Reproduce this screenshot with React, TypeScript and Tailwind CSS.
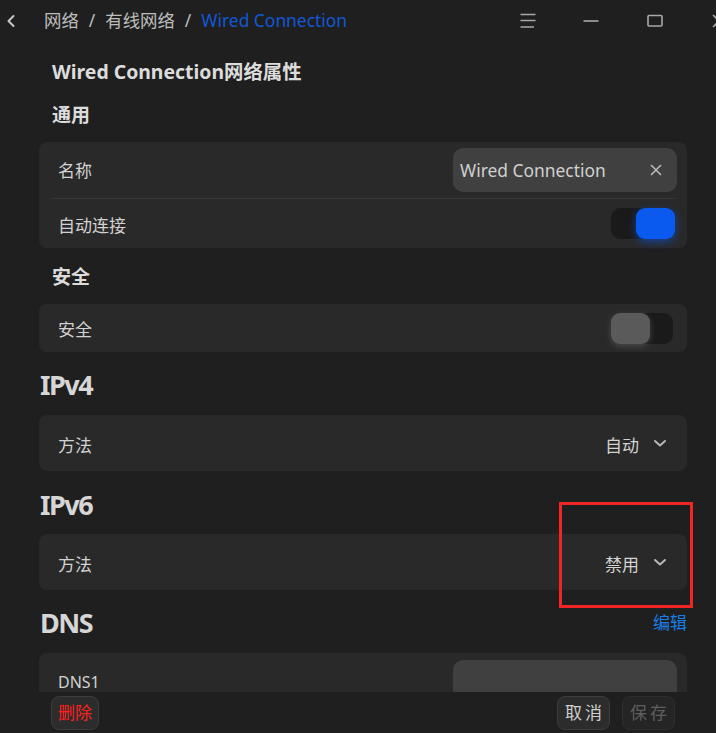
import React from "react";

const font = { fontFamily: '"Noto Sans", "Noto Sans CJK SC", sans-serif' };

function Chevron() {
  return (
    <svg width="14" height="10" viewBox="0 0 14 10" className="ml-[14px]">
      <path d="M2 3 L7 7.5 L12 3" fill="none" stroke="#b8b8b8" strokeWidth="2" strokeLinecap="round" strokeLinejoin="round" />
    </svg>
  );
}

function ToggleOn() {
  return (
    <div className="relative w-[64px] h-[31px] rounded-[9px] bg-[#1a1a1a]">
      <div className="absolute right-0 top-0 w-[39px] h-[31px] rounded-[9px] bg-[#0a5af0] shadow-[0_3px_8px_rgba(10,90,240,0.55)]" />
    </div>
  );
}

function ToggleOff() {
  return (
    <div className="relative w-[62px] h-[31px] rounded-[9px] bg-[#1a1a1a]">
      <div className="absolute left-0 top-0 w-[39px] h-[31px] rounded-[9px] bg-[#5a5a5a] shadow-[0_2px_6px_rgba(120,120,120,0.45)]" />
    </div>
  );
}

export default function App() {
  return (
    <div className="w-[716px] h-[733px] bg-[#1f1f1f] flex flex-col overflow-hidden relative text-[#d2d2d2]" style={font}>
      {/* Top bar */}
      <div className="h-[42px] flex items-center shrink-0 relative">
        <svg width="10" height="14" viewBox="0 0 10 14" className="ml-[6px]">
          <path d="M7.5 2 L2.5 7 L7.5 12" fill="none" stroke="#c8c8c8" strokeWidth="2" strokeLinecap="round" strokeLinejoin="round" />
        </svg>
        <div className="ml-[28px] flex items-center text-[17.4px] leading-none">
          <span className="text-[#bdbdbd]">网络</span>
          <span className="text-[#bdbdbd] mx-[10px]">/</span>
          <span className="text-[#bdbdbd]">有线网络</span>
          <span className="text-[#bdbdbd] mx-[10px]">/</span>
          <span className="text-[#1258d6]">Wired Connection</span>
        </div>
        <div className="flex-1" />
        <svg width="16" height="16" viewBox="0 0 16 16" className="mr-[47px]">
          <path d="M0.5 1.5 H15.5 M0.5 7.5 H15.5 M0.5 14 H14" stroke="#a8a8a8" strokeWidth="1.4" />
        </svg>
        <svg width="16" height="16" viewBox="0 0 16 16" className="mr-[48px]">
          <path d="M0.5 8 H15.5" stroke="#a8a8a8" strokeWidth="1.6" />
        </svg>
        <svg width="16" height="16" viewBox="0 0 16 16" className="mr-[46px]">
          <rect x="1" y="2.5" width="14" height="10.5" rx="1" fill="none" stroke="#a8a8a8" strokeWidth="1.6" />
        </svg>
        <svg width="7" height="16" viewBox="0 0 7 16">
          <path d="M4 2 L16 14 M16 2 L4 14" stroke="#a8a8a8" strokeWidth="1.6" />
        </svg>
      </div>

      {/* Content */}
      <div className="flex-1 overflow-hidden pl-[39px] w-[687px]">
        <div className="mt-[16px] h-[28px] flex items-center pl-[13px] text-[19.4px] font-bold text-[#dcdcdc]">
          Wired Connection网络属性
        </div>
        <div className="mt-[16px] h-[26px] flex items-center pl-[13px] text-[19px] font-bold text-[#dcdcdc]">通用</div>
        <div className="mt-[14px] rounded-[8px] bg-[#292929]">
          <div className="h-[56px] flex items-center pl-[19px] pr-[10px]">
            <span className="text-[17px] pt-[2px]">名称</span>
            <div className="flex-1" />
            <div className="w-[224px] h-[44px] rounded-[10px] bg-[#404040] flex items-center pl-[7px] pr-[15px]">
              <span className="text-[17.4px] text-[#d0d0d0] flex-1">Wired Connection</span>
              <svg width="12" height="12" viewBox="0 0 12 12">
                <path d="M1 1 L11 11 M11 1 L1 11" stroke="#bdbdbd" strokeWidth="1.5" />
              </svg>
            </div>
          </div>
          <div className="mx-[12px] h-px bg-[#363636]" />
          <div className="h-[49px] flex items-center pl-[19px] pr-[12px]">
            <span className="text-[17px] pt-[4px]">自动连接</span>
            <div className="flex-1" />
            <ToggleOn />
          </div>
        </div>

        <div className="mt-[16px] h-[26px] flex items-center pl-[13px] text-[19px] font-bold text-[#dcdcdc]">安全</div>
        <div className="mt-[14px] h-[48px] rounded-[8px] bg-[#292929] flex items-center pl-[19px] pr-[14px]">
          <span className="text-[17px] pt-[3px]">安全</span>
          <div className="flex-1" />
          <ToggleOff />
        </div>

        <div className="mt-[17px] h-[32px] flex items-center pl-[1px] text-[27px] font-bold tracking-[-1.5px] text-[#d6d6d6]">IPv4</div>
        <div className="mt-[14px] h-[56px] rounded-[8px] bg-[#292929] flex items-center pl-[19px] pr-[20px]">
          <span className="text-[17px] pt-[5px]">方法</span>
          <div className="flex-1" />
          <span className="text-[17px] pt-[5px]">自动</span>
          <Chevron />
        </div>

        <div className="mt-[18px] h-[32px] flex items-center pl-[1px] text-[27px] font-bold tracking-[-1.5px] text-[#d6d6d6]">IPv6</div>
        <div className="mt-[13px] h-[56px] rounded-[8px] bg-[#292929] flex items-center pl-[19px] pr-[20px]">
          <span className="text-[17px] pt-[5px]">方法</span>
          <div className="flex-1" />
          <span className="text-[17px] pt-[5px]">禁用</span>
          <Chevron />
        </div>

        <div className="mt-[17px] h-[32px] flex items-center pl-[1px]">
          <span className="text-[27px] font-bold tracking-[-1.5px] text-[#d6d6d6]">DNS</span>
          <div className="flex-1" />
          <span className="text-[17px] text-[#1a7ee8]">编辑</span>
        </div>
        <div className="mt-[14px] h-[70px] rounded-[8px] bg-[#292929] flex pl-[19px] pr-[10px]">
          <span className="text-[16px] leading-[22px] mt-[18px]">DNS1</span>
          <div className="flex-1" />
          <div className="w-[224px] h-[44px] mt-[7px] rounded-[10px] bg-[#404040]" />
        </div>
      </div>

      {/* Bottom bar */}
      <div className="h-[41px] shrink-0 flex items-center pl-[51px] pr-[41px]">
        <button className="w-[48px] h-[34px] rounded-[8px] bg-[#2c2c2c] border border-[#3c3c3c] text-[17px] text-[#ff1f1f] flex items-center justify-center">
          删除
        </button>
        <div className="flex-1" />
        <button className="w-[53px] h-[34px] rounded-[8px] bg-[#2c2c2c] border border-[#3c3c3c] text-[17px] text-[#cfcfcf] tracking-[3px] pl-[3px] flex items-center justify-center">
          取消
        </button>
        <button className="ml-[12px] w-[53px] h-[34px] rounded-[8px] bg-[#252525] border border-[#2e2e2e] text-[17px] text-[#5e5e5e] tracking-[3px] pl-[3px] flex items-center justify-center">
          保存
        </button>
      </div>

      {/* Red annotation */}
      <div className="absolute left-[559px] top-[502px] w-[134px] h-[106px] border-[3px] border-[#f02626] pointer-events-none" />
    </div>
  );
}
